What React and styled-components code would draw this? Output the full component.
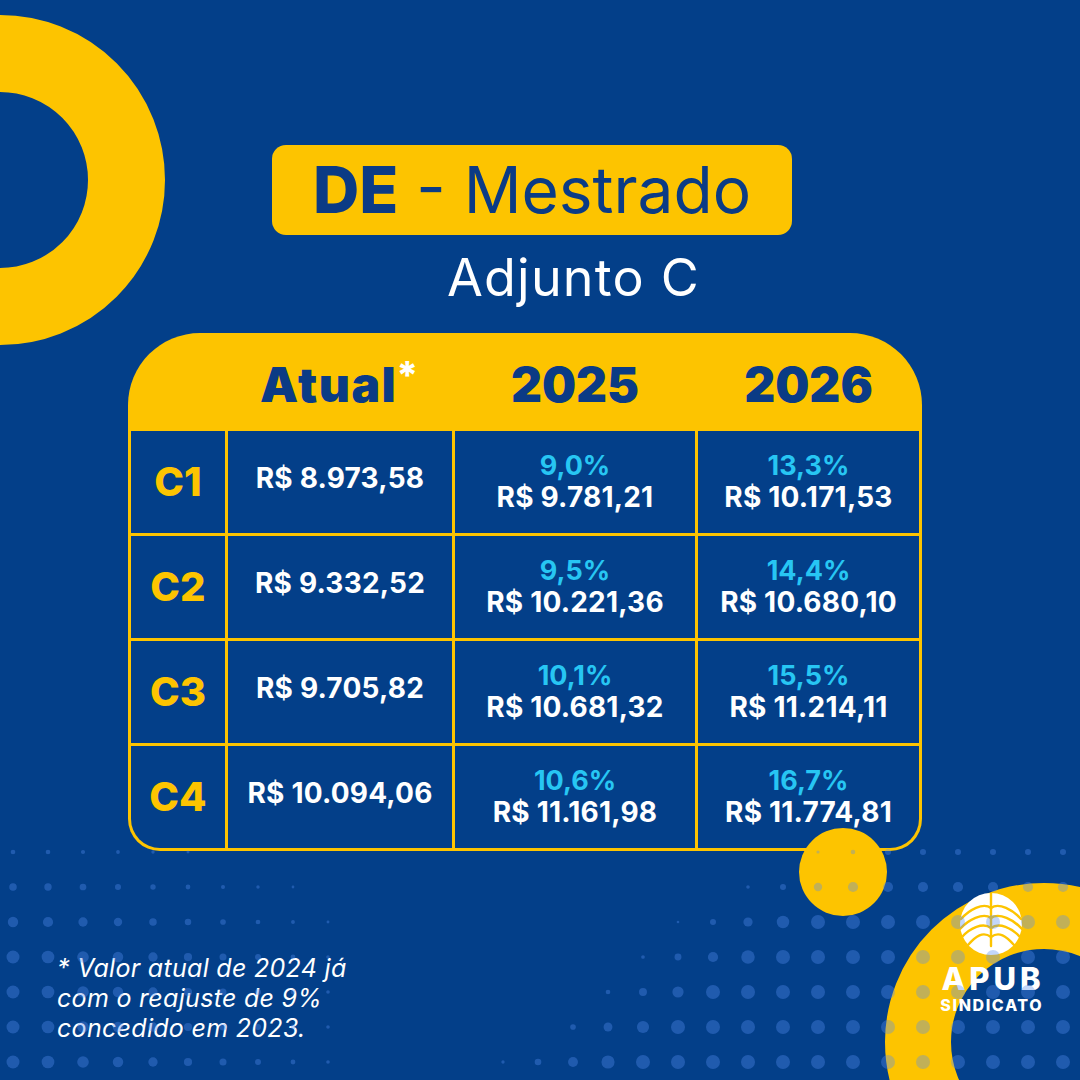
import styled, { createGlobalStyle } from 'styled-components';

const navy = '#033f89';
const yellow = '#fdc400';
const ink = '#0b3b85';
const cyan = '#27c6f3';

const GlobalStyle = createGlobalStyle`
  html, body {
    margin: 0;
    padding: 0;
    background: ${navy};
  }
  body {
    font-family: 'Inter', 'DejaVu Sans', sans-serif;
  }
`;

const rows = [
  { level: 'C1', atual: 'R$ 8.973,58', p25: '9,0%', v25: 'R$ 9.781,21', p26: '13,3%', v26: 'R$ 10.171,53' },
  { level: 'C2', atual: 'R$ 9.332,52', p25: '9,5%', v25: 'R$ 10.221,36', p26: '14,4%', v26: 'R$ 10.680,10' },
  { level: 'C3', atual: 'R$ 9.705,82', p25: '10,1%', v25: 'R$ 10.681,32', p26: '15,5%', v26: 'R$ 11.214,11' },
  { level: 'C4', atual: 'R$ 10.094,06', p25: '10,6%', v25: 'R$ 11.161,98', p26: '16,7%', v26: 'R$ 11.774,81' },
];

// halftone dots along the bottom edge
const clamp = (v) => Math.max(0, Math.min(1, v));
const dotRadius = (x, y) => {
  const left = 6.5 * clamp((440 - x) / 400) * clamp(0.35 + (y - 850) / 160);
  const start = 740 - (y - 852) * 1.3;
  const right = 7 * clamp((x - start) / 150) * clamp((y - 800) / 120);
  return Math.max(left, right);
};
const dots = [];
for (let j = 0; j < 31; j++) {
  for (let i = 0; i < 31; i++) {
    const x = 13 + 35 * i;
    const y = 12 + 35 * j;
    const r = dotRadius(x, y);
    if (r > 1.3) dots.push({ x, y, r });
  }
}

const Page = styled.main`
  position: relative;
  width: 1080px;
  height: 1080px;
  box-sizing: border-box;
  overflow: hidden;
  background: ${navy};
  display: flex;
  flex-direction: column;
  align-items: flex-start;
  padding-top: 145px;
`;

const Ring = styled.div`
  position: absolute;
  left: ${(p) => p.$x - p.$r}px;
  top: ${(p) => p.$y - p.$r}px;
  width: ${(p) => p.$r * 2}px;
  height: ${(p) => p.$r * 2}px;
  box-sizing: border-box;
  border-radius: 50%;
  border: ${(p) => p.$thick}px solid ${yellow};
  z-index: 0;
`;

const Disc = styled.div`
  position: absolute;
  left: 799px;
  top: 828px;
  width: 88px;
  height: 88px;
  border-radius: 50%;
  background: ${yellow};
  z-index: 2;
`;

const Dots = styled.svg`
  position: absolute;
  inset: 0;
  pointer-events: none;
  z-index: 3;
`;

const TitlePill = styled.h1`
  position: relative;
  z-index: 1;
  margin: 0 0 0 272px;
  width: 520px;
  height: 90px;
  border-radius: 14px;
  background: ${yellow};
  display: flex;
  align-items: center;
  justify-content: center;
  color: ${ink};
  font-size: 64px;
  font-weight: 400;
  line-height: 1;
  white-space: pre;

  strong {
    font-weight: 800;
  }
`;

const Subtitle = styled.h2`
  position: relative;
  z-index: 1;
  margin: 17px 0 0 447px;
  color: #fff;
  font-size: 52px;
  font-weight: 400;
  line-height: 1;
  letter-spacing: 1.2px;
`;

const Table = styled.section`
  position: relative;
  z-index: 1;
  margin: 29px 0 0 128px;
  width: 794px;
  box-sizing: border-box;
  padding: 0 3px 3px;
  background: ${yellow};
  border-radius: 72px 72px 32px 32px;
  overflow: hidden;
`;

const cols = '94px 224px 240px 221px';

const HeadRow = styled.div`
  display: grid;
  grid-template-columns: ${cols};
  column-gap: 3px;
  height: 95px;
  align-items: center;
  padding-top: 8px;
  box-sizing: border-box;
`;

const HeadCell = styled.div`
  text-align: center;
  color: ${ink};
  font-size: 48px;
  font-weight: 900;
  line-height: 1;
  letter-spacing: ${(p) => (p.$wide ? '1.5px' : '0')};

  sup {
    color: #fff;
    font-size: 38px;
    font-weight: 800;
    vertical-align: top;
    position: relative;
    top: -5px;
    margin-left: -1px;
  }
`;

const Body = styled.div`
  display: grid;
  grid-template-columns: ${cols};
  grid-auto-rows: 102px;
  gap: 3px;
  padding-top: 3px;
`;

const Cell = styled.div`
  background: ${navy};
  display: flex;
  flex-direction: column;
  align-items: center;
  justify-content: center;
  border-bottom-left-radius: ${(p) => (p.$corner === 'bl' ? '29px' : '0')};
  border-bottom-right-radius: ${(p) => (p.$corner === 'br' ? '29px' : '0')};
`;

const Level = styled.span`
  color: ${yellow};
  font-size: 40px;
  font-weight: 800;
  line-height: 1;
`;

const Money = styled.span`
  color: #fff;
  font-size: 28px;
  font-weight: 700;
  line-height: 33px;
  letter-spacing: 0.2px;
  margin-top: ${(p) => (p.$single ? '-8px' : '0')};
`;

const Percent = styled.span`
  color: ${cyan};
  font-size: 27px;
  font-weight: 700;
  line-height: 30px;
`;

const Footnote = styled.p`
  position: relative;
  z-index: 1;
  margin: 102px 0 0 57px;
  color: #fff;
  font-size: 25px;
  font-style: italic;
  font-weight: 400;
  line-height: 30px;
  letter-spacing: 0.3px;
`;

const Logo = styled.div`
  position: absolute;
  left: 931px;
  top: 893px;
  width: 120px;
  display: flex;
  flex-direction: column;
  align-items: center;
  color: #fff;
  z-index: 2;
`;

const LogoName = styled.span`
  margin-top: 12px;
  font-size: 31px;
  font-weight: 800;
  line-height: 24px;
  letter-spacing: 4px;
  margin-right: -4px;
`;

const LogoTag = styled.span`
  margin-top: 7px;
  font-size: 16px;
  font-weight: 800;
  line-height: 14px;
  letter-spacing: 1.6px;
  margin-right: -1.6px;
`;

// leaf ribs of the emblem: start on the stem, arch out to the rim
const ribs = [
  [-16, -30, -5],
  [-6, -31, 5],
  [4, -29, 13],
  [13, -23, 21],
];

const Emblem = () => (
  <svg width="62" height="62" viewBox="-31 -31 62 62">
    <circle r="31" fill="#fff" />
    <g stroke={yellow} strokeWidth="2.4" fill="none" strokeLinecap="round">
      <path d="M0 -31 V22" />
      {ribs.map(([y0, ex, ey]) => (
        <g key={y0}>
          <path d={`M0 ${y0} C-8 ${y0 - 6} ${ex + 8} ${ey - 9} ${ex} ${ey}`} />
          <path d={`M0 ${y0} C8 ${y0 - 6} ${-ex - 8} ${ey - 9} ${-ex} ${ey}`} />
        </g>
      ))}
    </g>
  </svg>
);

export default function App() {
  return (
    <>
      <GlobalStyle />
      <Page>
        <Ring $x={0} $y={180} $r={165} $thick={77} />
        <Ring $x={1044} $y={1042} $r={159} $thick={66} />

        <TitlePill>
          <strong>DE</strong> - Mestrado
        </TitlePill>
        <Subtitle>Adjunto C</Subtitle>

        <Table>
          <HeadRow>
            <span />
            <HeadCell $wide>
              Atual<sup>*</sup>
            </HeadCell>
            <HeadCell>2025</HeadCell>
            <HeadCell>2026</HeadCell>
          </HeadRow>
          <Body>
            {rows.map((r, i) => {
              const last = i === rows.length - 1;
              return [
                <Cell key={r.level + 'l'} $corner={last ? 'bl' : ''}>
                  <Level>{r.level}</Level>
                </Cell>,
                <Cell key={r.level + 'a'}>
                  <Money $single>{r.atual}</Money>
                </Cell>,
                <Cell key={r.level + 'b'}>
                  <Percent>{r.p25}</Percent>
                  <Money>{r.v25}</Money>
                </Cell>,
                <Cell key={r.level + 'c'} $corner={last ? 'br' : ''}>
                  <Percent>{r.p26}</Percent>
                  <Money>{r.v26}</Money>
                </Cell>,
              ];
            })}
          </Body>
        </Table>

        <Footnote>
          * Valor atual de 2024 já
          <br />
          com o reajuste de 9%
          <br />
          concedido em 2023.
        </Footnote>

        <Disc />
        <Logo>
          <Emblem />
          <LogoName>APUB</LogoName>
          <LogoTag>SINDICATO</LogoTag>
        </Logo>
        <Dots width="1080" height="1080" viewBox="0 0 1080 1080">
          {dots.map((d) => (
            <circle key={`${d.x}-${d.y}`} cx={d.x} cy={d.y} r={d.r} fill="rgba(86,140,240,0.36)" />
          ))}
        </Dots>
      </Page>
    </>
  );
}
